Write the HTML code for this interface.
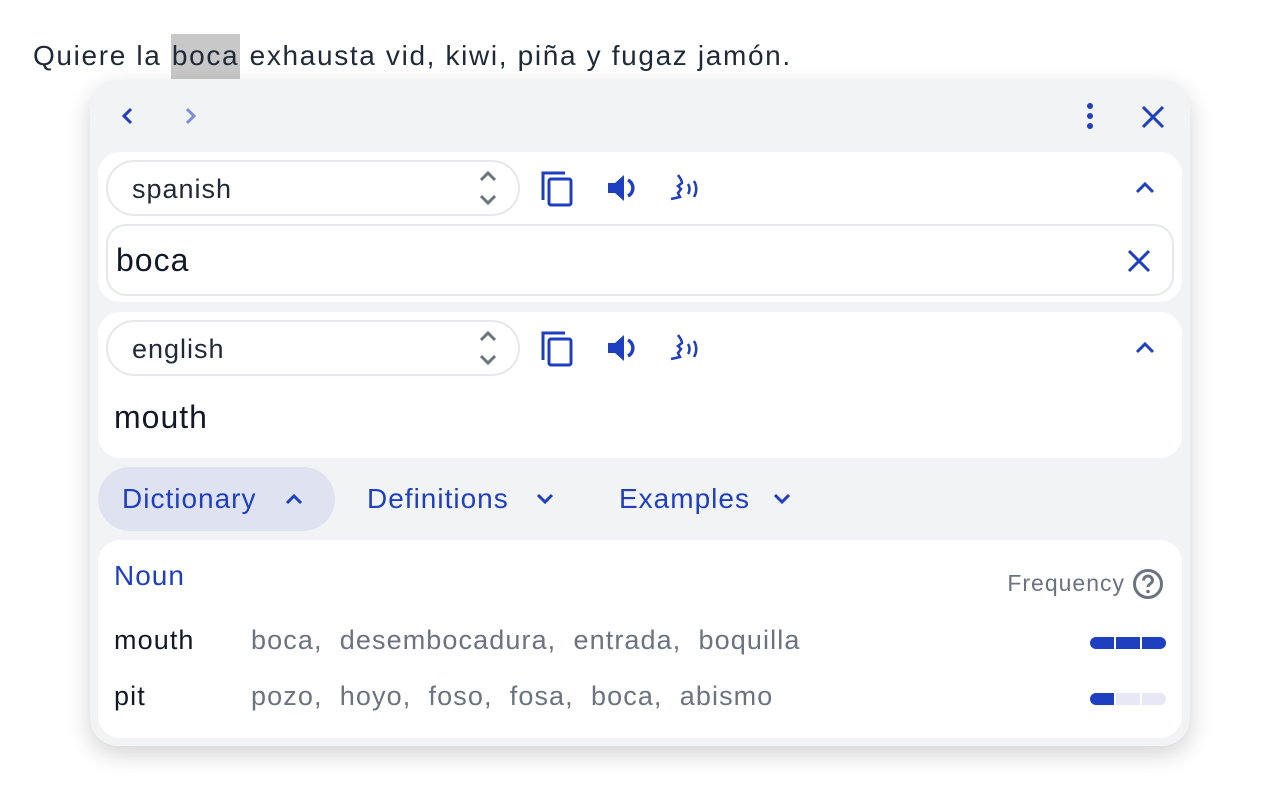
<!DOCTYPE html>
<html><head><style>
*{box-sizing:border-box;margin:0;padding:0}
body{width:1280px;height:800px;background:#fff;font-family:"Liberation Sans",sans-serif;position:relative;overflow:hidden;color:#1f2937}
.abs{position:absolute}
.sent{left:33px;top:40px;font-size:28px;letter-spacing:1.65px;color:#1f2937;white-space:nowrap}
.sent span{background:#c8c8c8;padding:6px 1px 8px}
.panel{left:90px;top:80px;width:1100px;height:666px;background:#f2f3f5;border-radius:28px;box-shadow:0 8px 24px rgba(0,0,0,.18)}
.card{background:#fff;border-radius:22px;left:8px;width:1084px}
.sel{position:absolute;left:8px;width:414px;height:56px;border:2px solid #e5e7eb;border-radius:28px;font-size:27px;letter-spacing:1px;padding:12px 0 0 24px;color:#1f2937}
.blue{color:#1e3fbf}
.tab{font-size:28px;letter-spacing:1px;color:#1e3fbf;position:absolute;top:403px}
.syn{color:#6b7280}
.row{font-size:27px;letter-spacing:1.1px;white-space:nowrap}
</style></head><body>
<div class="abs sent">Quiere la <span>boca</span> exhausta vid, kiwi, piña y fugaz jamón.</div>
<div class="abs panel">
 <svg class="abs" style="left:26px;top:24px" width="24" height="24" viewBox="0 0 24 24"><path d="M15 5l-7 7 7 7" fill="none" stroke="#1e3fbf" stroke-width="3"/></svg>
 <svg class="abs" style="left:88px;top:24px" width="24" height="24" viewBox="0 0 24 24"><path d="M9 5l7 7-7 7" fill="none" stroke="#7a8ed6" stroke-width="3"/></svg>
 <svg class="abs" style="left:988px;top:22px" width="24" height="30" viewBox="0 0 24 30"><circle cx="12" cy="4" r="3" fill="#1e3fbf"/><circle cx="12" cy="14" r="3" fill="#1e3fbf"/><circle cx="12" cy="24" r="3" fill="#1e3fbf"/></svg>
 <svg class="abs" style="left:1050px;top:24px" width="26" height="26" viewBox="0 0 26 26"><path d="M3 3l20 20M23 3L3 23" stroke="#1e3fbf" stroke-width="3"/></svg>

 <div class="abs card" style="top:72px;height:150px">
  <div class="sel" style="top:8px">spanish
   <svg class="abs" style="left:368px;top:6px" width="24" height="40" viewBox="0 0 24 40"><path d="M5 12l7-7 7 7M5 28l7 7 7-7" fill="none" stroke="#6b7280" stroke-width="3"/></svg></div>
  <svg class="abs" style="left:442px;top:18px" width="34" height="38" viewBox="0 0 34 38"><path d="M3 30V3h22" fill="none" stroke="#1e3fbf" stroke-width="3"/><rect x="9" y="9" width="22" height="26" rx="2" fill="none" stroke="#1e3fbf" stroke-width="3"/></svg>
  <svg class="abs" style="left:508px;top:20px" width="34" height="32" viewBox="0 0 34 32"><path d="M2 11h7l9-8v26l-9-8H2z" fill="#1e3fbf"/><path d="M22 8a9 9 0 010 16" fill="none" stroke="#1e3fbf" stroke-width="3.5"/></svg>
  <svg class="abs" style="left:570px;top:20px" width="36" height="34" viewBox="0 0 36 34"><path d="M10 3c2 3 4 5 4 8l-4 3 3 3-3 4 2 4-9 2" fill="none" stroke="#1e3fbf" stroke-width="2.5"/><path d="M20 12c2 3 2 7 0 10M26 9c3 5 3 11 0 16" fill="none" stroke="#1e3fbf" stroke-width="2.5"/></svg>
  <svg class="abs" style="left:1036px;top:28px" width="22" height="16" viewBox="0 0 22 16"><path d="M3 12l8-8 8 8" fill="none" stroke="#1e3fbf" stroke-width="3"/></svg>
  <div class="abs" style="left:8px;top:72px;width:1068px;height:72px;border:2px solid #e5e7eb;border-radius:20px;font-size:32px;letter-spacing:1px;padding:16px 0 0 8px;color:#111827">boca
   <svg class="abs" style="left:1018px;top:22px" width="26" height="26" viewBox="0 0 26 26"><path d="M3 3l20 20M23 3L3 23" stroke="#1e3fbf" stroke-width="3"/></svg></div>
 </div>

 <div class="abs card" style="top:232px;height:146px">
  <div class="sel" style="top:8px">english
   <svg class="abs" style="left:368px;top:6px" width="24" height="40" viewBox="0 0 24 40"><path d="M5 12l7-7 7 7M5 28l7 7 7-7" fill="none" stroke="#6b7280" stroke-width="3"/></svg></div>
  <svg class="abs" style="left:442px;top:18px" width="34" height="38" viewBox="0 0 34 38"><path d="M3 30V3h22" fill="none" stroke="#1e3fbf" stroke-width="3"/><rect x="9" y="9" width="22" height="26" rx="2" fill="none" stroke="#1e3fbf" stroke-width="3"/></svg>
  <svg class="abs" style="left:508px;top:20px" width="34" height="32" viewBox="0 0 34 32"><path d="M2 11h7l9-8v26l-9-8H2z" fill="#1e3fbf"/><path d="M22 8a9 9 0 010 16" fill="none" stroke="#1e3fbf" stroke-width="3.5"/></svg>
  <svg class="abs" style="left:570px;top:20px" width="36" height="34" viewBox="0 0 36 34"><path d="M10 3c2 3 4 5 4 8l-4 3 3 3-3 4 2 4-9 2" fill="none" stroke="#1e3fbf" stroke-width="2.5"/><path d="M20 12c2 3 2 7 0 10M26 9c3 5 3 11 0 16" fill="none" stroke="#1e3fbf" stroke-width="2.5"/></svg>
  <svg class="abs" style="left:1036px;top:28px" width="22" height="16" viewBox="0 0 22 16"><path d="M3 12l8-8 8 8" fill="none" stroke="#1e3fbf" stroke-width="3"/></svg>
  <div class="abs" style="left:16px;top:87px;font-size:32px;letter-spacing:1px;color:#111827">mouth</div>
 </div>

 <div class="abs" style="left:8px;top:387px;width:237px;height:64px;background:#dfe3f1;border-radius:32px"></div>
 <div class="tab" style="left:32px">Dictionary</div>
 <svg class="abs" style="left:194px;top:412px" width="20" height="14" viewBox="0 0 20 14"><path d="M3 11l7-7 7 7" fill="none" stroke="#1e3fbf" stroke-width="3"/></svg>
 <div class="tab" style="left:277px">Definitions</div>
 <svg class="abs" style="left:445px;top:412px" width="20" height="14" viewBox="0 0 20 14"><path d="M3 3l7 7 7-7" fill="none" stroke="#1e3fbf" stroke-width="3"/></svg>
 <div class="tab" style="left:529px">Examples</div>
 <svg class="abs" style="left:682px;top:412px" width="20" height="14" viewBox="0 0 20 14"><path d="M3 3l7 7 7-7" fill="none" stroke="#1e3fbf" stroke-width="3"/></svg>

 <div class="abs card" style="top:460px;height:198px">
  <div class="abs blue" style="left:16px;top:20px;font-size:28px;letter-spacing:1px">Noun</div>
  <div class="abs" style="right:57px;top:30px;font-size:23px;letter-spacing:1px;color:#6b7280">Frequency</div>
  <svg class="abs" style="left:1034px;top:28px" width="32" height="32" viewBox="0 0 32 32"><circle cx="16" cy="16" r="13.5" fill="none" stroke="#6b7280" stroke-width="3"/><path d="M11.5 12.5a4.5 4.5 0 119 0c0 3-4.5 3.5-4.5 6.5" fill="none" stroke="#6b7280" stroke-width="3"/><circle cx="16" cy="23.5" r="1.8" fill="#6b7280"/></svg>
  <div class="abs row" style="left:16px;top:85px;color:#111827">mouth</div>
  <div class="abs syn row" style="left:153px;top:85px">boca,&nbsp; desembocadura,&nbsp; entrada,&nbsp; boquilla</div>
  <div class="abs" style="left:992px;top:97px;width:76px;height:12px;display:flex;gap:2px"><div style="flex:1;background:#1e3fbf;border-radius:6px 0 0 6px"></div><div style="flex:1;background:#1e3fbf"></div><div style="flex:1;background:#1e3fbf;border-radius:0 6px 6px 0"></div></div>
  <div class="abs row" style="left:16px;top:141px;color:#111827">pit</div>
  <div class="abs syn row" style="left:153px;top:141px">pozo,&nbsp; hoyo,&nbsp; foso,&nbsp; fosa,&nbsp; boca,&nbsp; abismo</div>
  <div class="abs" style="left:992px;top:153px;width:76px;height:12px;display:flex;gap:2px"><div style="flex:1;background:#1e3fbf;border-radius:6px 0 0 6px"></div><div style="flex:1;background:#e6e8f6"></div><div style="flex:1;background:#e6e8f6;border-radius:0 6px 6px 0"></div></div>
 </div>
</div>
</body></html>
